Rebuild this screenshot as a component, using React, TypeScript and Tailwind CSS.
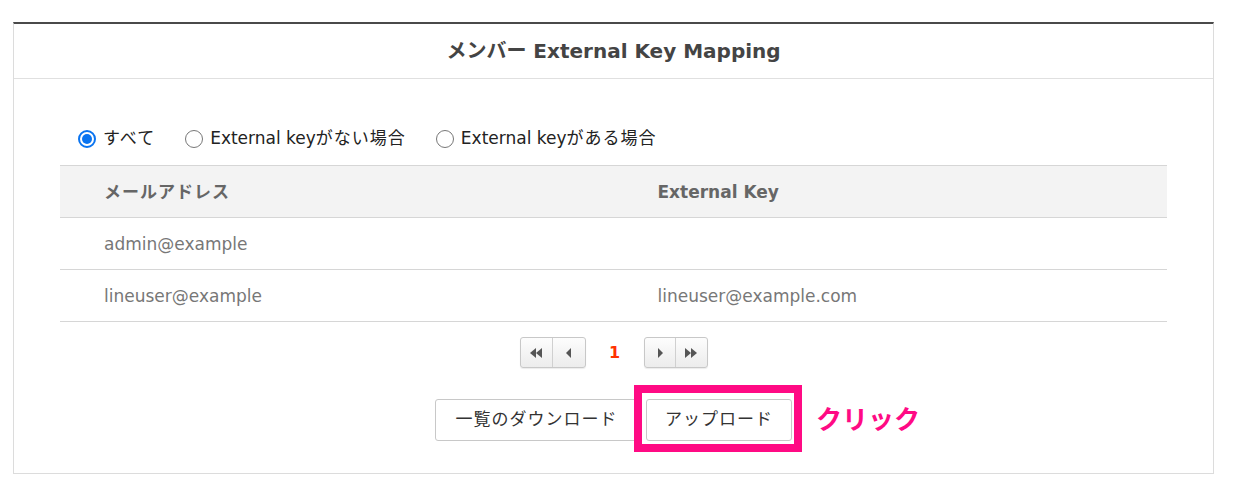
import { useState } from "react";

const FONT = {
  fontFamily: '"DejaVu Sans", "Noto Sans CJK JP", sans-serif',
};

interface Row {
  email: string;
  externalKey: string;
}

const rows: Row[] = [
  { email: "admin@example", externalKey: "" },
  { email: "lineuser@example", externalKey: "lineuser@example.com" },
];

// latin part + japanese part, the japanese gets a little tracking
const filters: [string, string][] = [
  ["", "すべて"],
  ["External key", "がない場合"],
  ["External key", "がある場合"],
];

function Radio({ checked }: { checked: boolean }) {
  if (checked) {
    return (
      <span className="flex h-[18px] w-[18px] items-center justify-center rounded-full border-2 border-[#0a74f0] bg-white">
        <span className="h-[10px] w-[10px] rounded-full bg-[#0a74f0]" />
      </span>
    );
  }
  return <span className="h-[18px] w-[18px] rounded-full border-[1.5px] border-[#777] bg-white" />;
}

function PagerIcon({ dir, double }: { dir: "left" | "right"; double?: boolean }) {
  const pts =
    dir === "left"
      ? double
        ? ["6,0 6,10 0,5", "12,0 12,10 6,5"]
        : ["8,0 8,10 3,5"]
      : double
        ? ["0,0 0,10 6,5", "6,0 6,10 12,5"]
        : ["4,0 4,10 9,5"];
  return (
    <svg width="12" height="10" viewBox="0 0 12 10">
      {pts.map((p) => (
        <polygon key={p} points={p} fill="#555" />
      ))}
    </svg>
  );
}

function PagerGroup({ children }: { children: React.ReactNode }) {
  return (
    <div className="flex h-[31px] overflow-hidden rounded-[3px] border border-[#c8c8c8] bg-gradient-to-b from-[#fdfdfd] to-[#ececec] shadow-[0_1px_1px_rgba(0,0,0,0.08)]">
      {children}
    </div>
  );
}

export default function App() {
  const [filter, setFilter] = useState(0);

  return (
    <div className="min-h-[495px] bg-white pt-[22px]" style={FONT}>
      <div className="ml-[13px] w-[1201px] border border-t-2 border-[#dcdcdc] border-t-[#4a4a4a]">
        {/* header */}
        <div className="flex h-[55px] items-center justify-center border-b border-[#e0e0e0]">
          <h1 className="text-[20px] font-bold text-[#444]">メンバー External Key Mapping</h1>
        </div>

        <div className="px-[46px] pb-[32px] pt-[47px]">
          {/* filters */}
          <div className="mb-[13px] flex h-[26px] items-center pl-[18px] text-[17px] text-[#222]">
            {filters.map(([latin, jp], i) => (
              <label
                key={latin + jp}
                onClick={() => setFilter(i)}
                className="mr-[30px] flex cursor-pointer items-center gap-[7px]"
              >
                <Radio checked={filter === i} />
                <span>
                  {latin}
                  <span className="tracking-[1px]">{jp}</span>
                </span>
              </label>
            ))}
          </div>

          {/* table */}
          <table className="w-full border-collapse text-[17px]">
            <thead>
              <tr className="h-[52px] border-y border-[#d6d6d6] bg-[#f3f3f3] text-left">
                <th className="w-1/2 pl-[44px] pt-[3px] font-bold tracking-[1px] text-[#666]">メールアドレス</th>
                <th className="w-1/2 pl-[44px] pt-[3px] font-bold text-[#666]">External Key</th>
              </tr>
            </thead>
            <tbody>
              {rows.map((r) => (
                <tr key={r.email} className="h-[52px] border-b border-[#d6d6d6] text-[#777]">
                  <td className="pl-[44px] pt-[3px]">{r.email}</td>
                  <td className="pl-[44px] pt-[3px]">{r.externalKey}</td>
                </tr>
              ))}
            </tbody>
          </table>

          {/* pagination */}
          <div className="mt-[15px] flex items-center justify-center">
            <PagerGroup>
              <button className="flex w-[32px] items-center justify-center border-r border-[#d0d0d0]">
                <PagerIcon dir="left" double />
              </button>
              <button className="flex w-[32px] items-center justify-center">
                <PagerIcon dir="left" />
              </button>
            </PagerGroup>
            <span className="w-[58px] text-center text-[16px] font-bold text-[#ff3300]">1</span>
            <PagerGroup>
              <button className="flex w-[31px] items-center justify-center border-r border-[#d0d0d0]">
                <PagerIcon dir="right" />
              </button>
              <button className="flex w-[31px] items-center justify-center">
                <PagerIcon dir="right" double />
              </button>
            </PagerGroup>
          </div>

          {/* actions */}
          <div className="mt-[31px] flex items-center justify-center gap-[8px]">
            <button className="h-[42px] w-[203px] rounded-[3px] border border-[#c8c8c8] bg-white text-[17px] tracking-[1px] text-[#333]">
              一覧のダウンロード
            </button>
            <div className="relative">
              <button className="h-[42px] w-[146px] rounded-[3px] border border-[#c8c8c8] bg-white text-[17px] tracking-[1px] text-[#333]">
                アップロード
              </button>
              <div className="pointer-events-none absolute -bottom-[11px] -left-[12px] -right-[10px] -top-[14px] border-[8px] border-[#ff0a84]" />
              <span className="absolute left-[170px] top-1/2 -translate-y-1/2 whitespace-nowrap text-[26px] font-bold text-[#ff0a84]">
                クリック
              </span>
            </div>
          </div>
        </div>
      </div>
    </div>
  );
}
